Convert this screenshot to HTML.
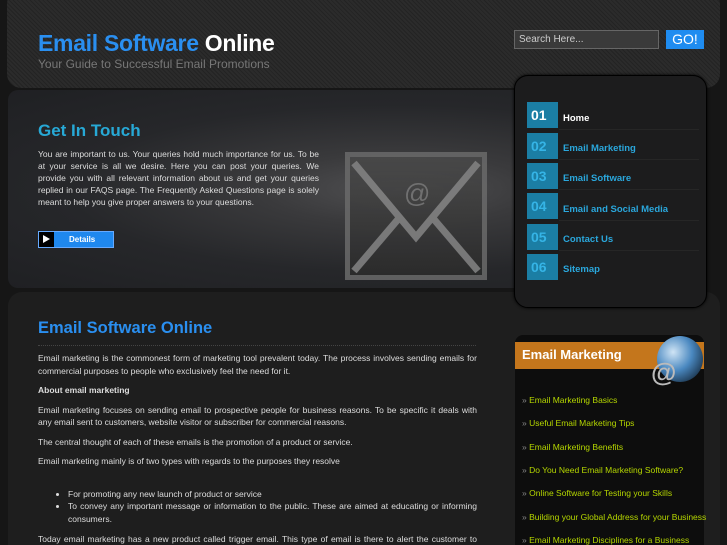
<!DOCTYPE html>
<html><head><meta charset="utf-8"><style>
*{margin:0;padding:0;box-sizing:border-box}
html,body{width:727px;height:545px;overflow:hidden}
body{background:#161616;font-family:"Liberation Sans",sans-serif;position:relative}
.hdr{position:absolute;left:7px;top:-10px;width:713px;height:98px;border-radius:14px;background:#2b2b2b;background-image:repeating-linear-gradient(45deg,rgba(0,0,0,.18) 0 1px,transparent 1px 3px)}
.logo{position:absolute;left:38px;top:30px;font-size:23px;font-weight:bold;color:#2a8ff0;letter-spacing:-.3px}
.logo span{color:#fff}
.tag{position:absolute;left:38px;top:57px;font-size:12px;color:#777}
.search{position:absolute;left:514px;top:30px;width:145px;height:19px;background:#3a3a3a;border:1px solid #666;color:#ccc;font-size:10px;padding:3px 4px}
.go{position:absolute;left:666px;top:30px;width:38px;height:19px;background:#1f8cf0;color:#fff;font-size:14px;text-align:center;line-height:19px}
.banner{position:absolute;left:8px;top:90px;width:520px;height:198px;border-radius:10px 0 0 10px;background:radial-gradient(ellipse at 75% 50%,#505052 0,#3a3a3c 25%,#26272a 60%,#1f2023 100%)}
.gt{position:absolute;left:38px;top:121px;font-size:17px;color:#27a9d6;font-weight:bold}
.gp{position:absolute;left:38px;top:148px;width:281px;font-size:8.5px;line-height:12px;color:#ddd;text-align:justify}
.det{position:absolute;left:38px;top:231px;width:76px;height:17px;background:#1f88ee;border:1px solid #6af;color:#fff;font-size:8px;font-weight:bold;line-height:15px;padding-left:30px}
.det:before{content:"";position:absolute;left:0;top:0;width:15px;height:15px;background:#000}
.det:after{content:"";position:absolute;left:4px;top:3px;border-left:7px solid #fff;border-top:4.5px solid transparent;border-bottom:4.5px solid transparent}
.env{position:absolute;left:345px;top:152px;width:142px;height:128px;border:5px solid #6a6a6a;background:linear-gradient(#4a4a4a,#2c2c2c);opacity:.85}
.nav{position:absolute;left:514px;top:75px;width:193px;height:233px;border-radius:14px;background:#1c1c1d;border:1px solid #000;box-shadow:0 0 3px #000}
.ni{position:absolute;left:12px;width:31px;height:26px;background:#1b7ea4;color:#35b4e6;font-size:14px;font-weight:bold;line-height:26px;padding-left:4px}
.nt{position:absolute;left:48px;font-size:9.5px;font-weight:bold;color:#2aa7dc}
.nl{position:absolute;left:44px;width:140px;height:1px;background:#262626}
.main{position:absolute;left:8px;top:292px;width:712px;height:270px;border-radius:14px;background:#1e1e1e}
.mt{position:absolute;left:38px;top:319px;font-size:16.5px;font-weight:bold;color:#2a8ff0}
.hr{position:absolute;left:38px;top:345px;width:438px;border-top:1px dotted #444}
.ct{position:absolute;left:38px;top:352px;width:439px;font-size:8.5px;line-height:12.5px;color:#ddd;text-align:justify}
.ct p{margin-bottom:7px}
.ct ul{margin:20px 0 8px 30px;list-style:disc}
.sb{position:absolute;left:515px;top:335px;width:189px;height:220px;border-radius:8px;background:#0d0d0d}
.sh{position:absolute;left:515px;top:342px;width:189px;height:27px;background:#c4761c;color:#fff;font-size:13px;font-weight:bold;padding:5px 7px}
.globe{position:absolute;left:657px;top:336px;width:46px;height:46px;border-radius:50%;background:radial-gradient(circle at 35% 35%,#cfe4f5,#4a88c0 45%,#123 90%)}
.at{position:absolute;left:651px;top:357px;font-size:26px;color:#bbb;font-weight:bold}
.sl{position:absolute;left:522px;font-size:8.5px;color:#b5d600}
.sl b{color:#888;font-weight:normal}
</style></head><body>
<div class="hdr"></div>
<div class="logo">Email Software <span>Online</span></div>
<div class="tag">Your Guide to Successful Email Promotions</div>
<div class="search">Search Here...</div>
<div class="go">GO!</div>
<div class="banner"></div>
<div class="env"><svg width="132" height="118" viewBox="0 0 132 118"><path d="M4 6 L66 80 L128 6 M4 114 L50 60 M128 114 L82 60" stroke="#858585" stroke-width="7" fill="none"/><text x="54" y="45" font-size="26" fill="#777" font-family="Liberation Sans">@</text></svg></div>
<div class="gt">Get In Touch</div>
<div class="gp">You are important to us. Your queries hold much importance for us. To be at your service is all we desire. Here you can post your queries. We provide you with all relevant information about us and get your queries replied in our FAQS page. The Frequently Asked Questions page is solely meant to help you give proper answers to your questions.</div>
<div class="det">Details</div>
<div class="main"></div>
<div class="nav">
<div class="ni" style="top:26px;color:#fff">01</div><div class="nt" style="top:37px;color:#fff">Home</div><div class="nl" style="top:53px"></div>
<div class="ni" style="top:57px">02</div><div class="nt" style="top:67px">Email Marketing</div><div class="nl" style="top:83px"></div>
<div class="ni" style="top:87px">03</div><div class="nt" style="top:97px">Email Software</div><div class="nl" style="top:113px"></div>
<div class="ni" style="top:117px">04</div><div class="nt" style="top:128px">Email and Social Media</div><div class="nl" style="top:144px"></div>
<div class="ni" style="top:148px">05</div><div class="nt" style="top:158px">Contact Us</div><div class="nl" style="top:174px"></div>
<div class="ni" style="top:178px">06</div><div class="nt" style="top:188px">Sitemap</div>
</div>
<div class="mt">Email Software Online</div>
<div class="hr"></div>
<div class="ct">
<p>Email marketing is the commonest form of marketing tool prevalent today. The process involves sending emails for commercial purposes to people who exclusively feel the need for it.</p>
<p><b>About email marketing</b></p>
<p>Email marketing focuses on sending email to prospective people for business reasons. To be specific it deals with any email sent to customers, website visitor or subscriber for commercial reasons.</p>
<p>The central thought of each of these emails is the promotion of a product or service.</p>
<p>Email marketing mainly is of two types with regards to the purposes they resolve</p>
<ul><li>For promoting any new launch of product or service</li><li>To convey any important message or information to the public. These are aimed at educating or informing consumers.</li></ul>
<p>Today email marketing has a new product called trigger email. This type of email is there to alert the customer to complete their purchase or any unsuccessful task.</p>
</div>
<div class="sb"></div>
<div class="sh">Email Marketing</div>
<div class="globe"></div>
<div class="at">@</div>
<div class="sl" style="top:395px"><b>»</b> Email Marketing Basics</div>
<div class="sl" style="top:418px"><b>»</b> Useful Email Marketing Tips</div>
<div class="sl" style="top:442px"><b>»</b> Email Marketing Benefits</div>
<div class="sl" style="top:465px"><b>»</b> Do You Need Email Marketing Software?</div>
<div class="sl" style="top:488px"><b>»</b> Online Software for Testing your Skills</div>
<div class="sl" style="top:512px"><b>»</b> Building your Global Address for your Business</div>
<div class="sl" style="top:535px"><b>»</b> Email Marketing Disciplines for a Business</div>
</body></html>
